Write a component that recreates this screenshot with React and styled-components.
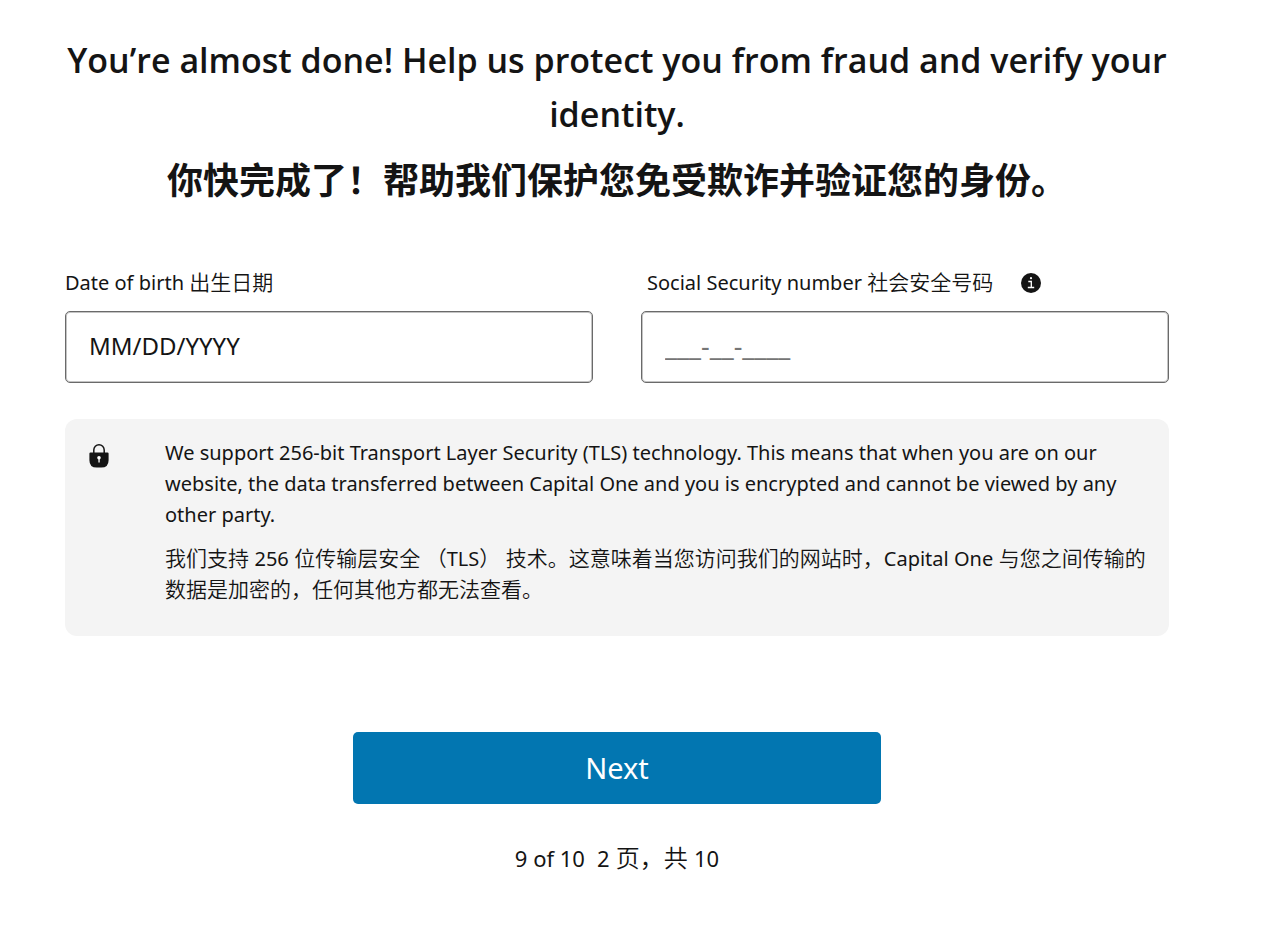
import React, { useState } from "react";
import styled, { createGlobalStyle } from "styled-components";

const GlobalStyle = createGlobalStyle`
  * {
    box-sizing: border-box;
  }

  body {
    margin: 0;
    background-color: #ffffff;
    color: #141414;
    font-family: "Noto Sans", "Noto Sans CJK SC", sans-serif;
    font-size: 20px;
    line-height: 31px;
  }
`;

const Page = styled.main`
  padding: 33px 106px 61px 65px;
`;

const Heading = styled.h1`
  margin: 0;
  font-family: "Open Sans", "Noto Sans CJK SC", sans-serif;
  font-size: 34px;
  font-weight: 600;
  line-height: 54px;
  text-align: center;
`;

const Translation = styled.span`
  font-size: 21px;
  font-weight: 350;
`;

const Latin = styled.span`
  font-size: 20px;
  font-weight: 400;
`;

const HeadingTranslation = styled.span`
  display: block;
  margin-top: 10px;
  font-family: "Noto Sans CJK SC", sans-serif;
  font-size: 36px;
  font-weight: 700;
`;

const Fields = styled.div`
  display: grid;
  grid-template-columns: 1fr 1fr;
  gap: 48px;
  margin-top: 62px;
`;

const Field = styled.div`
  min-width: 0;
`;

const LabelRow = styled.div`
  display: flex;
  align-items: center;
  gap: 28px;
  height: 31px;
  margin-bottom: 13px;
  padding-left: ${(props) => (props.$inset ? "6px" : "0")};
`;

const InfoButton = styled.button`
  display: flex;
  padding: 0;
  border: none;
  background: none;
  color: #141414;
  cursor: pointer;
`;

const Input = styled.input`
  display: block;
  width: 100%;
  height: 72px;
  padding: 0 23px 4px;
  border: 1px solid #6a6a6a;
  border-radius: 5px;
  background-color: #ffffff;
  box-shadow: inset 0 0 0 1px #c4c4c4;
  color: #141414;
  font-family: inherit;
  font-size: ${(props) => (props.$muted ? "27px" : "24px")};

  &::placeholder {
    color: ${(props) => (props.$muted ? "#757575" : "#141414")};
    opacity: 1;
  }
`;

const Notice = styled.section`
  display: flex;
  gap: 56px;
  margin-top: 36px;
  padding: 18px 18px 31px 24px;
  border-radius: 12px;
  background-color: #f4f4f4;
`;

const LockIcon = styled.svg`
  flex: none;
  margin-top: 7px;
`;

const NoticeText = styled.p`
  margin: 0 0 ${(props) => (props.$last ? "0" : "13px")};
`;

const NextButton = styled.button`
  display: block;
  width: calc(50% - 24px);
  height: 72px;
  margin: 96px auto 38px;
  padding: 0 0 2px;
  border: none;
  border-radius: 5px;
  background-color: #0276b1;
  color: #ffffff;
  font-family: inherit;
  font-size: 29px;
  cursor: pointer;
`;

const Progress = styled.p`
  display: flex;
  align-items: baseline;
  justify-content: center;
  gap: 12px;
  margin: 0;
  font-size: 22px;

  ${Translation} {
    font-size: 24px;
  }

  ${Latin} {
    font-size: 22px;
  }
`;

const App = () => {
  const [birthDate, setBirthDate] = useState("");
  const [ssn, setSsn] = useState("");

  return (
    <>
      <GlobalStyle />
      <Page>
        <Heading>
          You’re almost done! Help us protect you from fraud and verify your identity.
          <HeadingTranslation lang="zh-CN">
            你快完成了！帮助我们保护您免受欺诈并验证您的身份。
          </HeadingTranslation>
        </Heading>

        <form onSubmit={(e) => e.preventDefault()}>
          <Fields>
            <Field>
              <LabelRow>
                <label htmlFor="birth-date">
                  Date of birth <Translation lang="zh-CN">出生日期</Translation>
                </label>
              </LabelRow>
              <Input
                id="birth-date"
                placeholder="MM/DD/YYYY"
                value={birthDate}
                onChange={(e) => setBirthDate(e.target.value)}
              />
            </Field>

            <Field>
              <LabelRow $inset>
                <label htmlFor="ssn">
                  Social Security number <Translation lang="zh-CN">社会安全号码</Translation>
                </label>
                <InfoButton type="button" aria-label="About your Social Security number">
                  <svg width="20" height="20" viewBox="0 0 20 20" aria-hidden="true">
                    <circle cx="10" cy="10" r="10" fill="currentColor" />
                    <circle cx="10" cy="5.2" r="1.1" fill="#fff" />
                    <path d="M7.3 8.5h3v5.5M6.8 14.5h6.4" fill="none" stroke="#fff" strokeWidth="1.3" />
                  </svg>
                </InfoButton>
              </LabelRow>
              <Input
                id="ssn"
                $muted
                placeholder="___-__-____"
                value={ssn}
                onChange={(e) => setSsn(e.target.value)}
              />
            </Field>
          </Fields>

          {/* Security notice */}
          <Notice>
            <LockIcon width="20" height="24" viewBox="0 0 20 24" aria-hidden="true">
              <path d="M4.8 9V6a5.2 5.2 0 0 1 10.4 0v3" fill="none" stroke="#141414" strokeWidth="1.5" />
              <path d="M1.6 8.4h16.8q1.2 0 1.2 1.2v6.6q0 7.4-7.4 7.4H7.8q-7.4 0-7.4-7.4V9.6q0-1.2 1.2-1.2z" fill="#141414" />
              <circle cx="10" cy="13.8" r="1.8" fill="#fff" />
              <path d="M9.4 14h1.3v4.6H9.4z" fill="#fff" />
            </LockIcon>
            <div>
              <NoticeText>
                We support 256-bit Transport Layer Security (TLS) technology. This means that when
                you are on our website, the data transferred between Capital One and you is
                encrypted and cannot be viewed by any other party.
              </NoticeText>
              <NoticeText $last>
                <Translation lang="zh-CN">
                  我们支持 <Latin>256</Latin> 位传输层安全 （<Latin>TLS</Latin>）
                  技术。这意味着当您访问我们的网站时，<Latin>Capital One</Latin>{" "}
                  与您之间传输的数据是加密的，任何其他方都无法查看。
                </Translation>
              </NoticeText>
            </div>
          </Notice>

          <NextButton type="submit">Next</NextButton>
        </form>

        <Progress>
          <span>9 of 10</span>
          <Translation lang="zh-CN">
            <Latin>2</Latin> 页，共 <Latin>10</Latin>
          </Translation>
        </Progress>
      </Page>
    </>
  );
};

export default App;
